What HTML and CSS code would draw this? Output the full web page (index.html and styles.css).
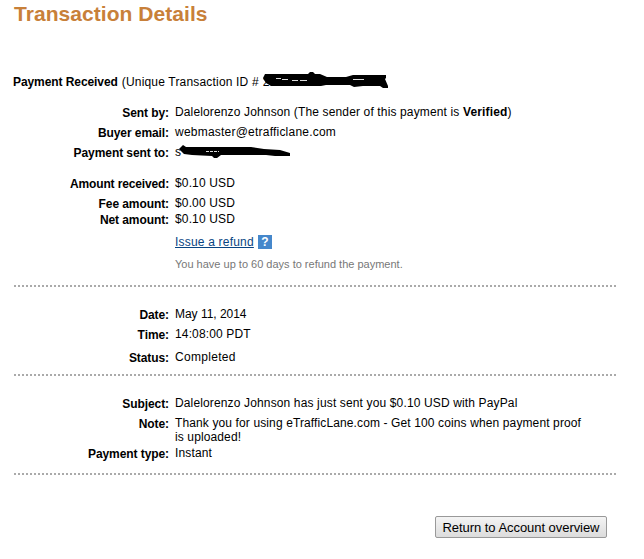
FILE: index.html
```
<!DOCTYPE html>
<html lang="en">
<head>
	<meta charset="utf-8">
	<title>Transaction Details</title>
	<link rel="stylesheet" href="styles.css">
</head>
<body>

	<h1>Transaction Details</h1>

	<div class="heading">
		<b class="received">Payment Received</b>
		<span class="unique">(Unique Transaction ID #</span>
		<span class="hidden">2<svg class="scribble" width="128" height="20" viewBox="0 0 128 20">
			<path d="M0 7L2 3H45L47 1H50L52 3H57L64 6H83L90 4H123V7L122 8L125 15V17H120L117 15H100L91 16L87 14H63L58 15H8L3 12L1 9Z"/>
			<path class="gap" d="M13 7.5H18M19 8.5H25M29 9.5H35M37 9.5H44M90 8.5H101"/>
		</svg></span>
	</div>

	<dl class="section">
		<div class="row"><dt>Sent by:</dt><dd class="sender">Dalelorenzo Johnson (The sender of this payment is <b>Verified</b>)</dd></div>
		<div class="row"><dt>Buyer email:</dt><dd class="email">webmaster@etrafficlane.com</dd></div>
		<div class="row"><dt>Payment sent to:</dt><dd><span class="hidden">s<svg class="scribble account" width="118" height="20" viewBox="0 0 118 20">
			<path d="M5 8L9 4L12 6H77L90 8L106 9L116 12V15L101 15L92 14H47L43 17H40L38 15L18 14L10 13Z"/>
			<path class="gap" d="M32 10.5H45" stroke-dasharray="3 1"/>
		</svg></span></dd></div>
		<div class="row wide"><dt class="amount">Amount received:</dt><dd>$0.10 USD</dd></div>
		<div class="row"><dt>Fee amount:</dt><dd>$0.00 USD</dd></div>
		<div class="row tight"><dt>Net amount:</dt><dd>$0.10 USD</dd></div>
		<div class="row refund"><dt></dt><dd><a href="#">Issue a refund</a><span class="help">?</span></dd></div>
		<div class="row hint"><dt></dt><dd>You have up to 60 days to refund the payment.</dd></div>
	</dl>

	<dl class="section date">
		<div class="row"><dt>Date:</dt><dd class="day">May 11, 2014</dd></div>
		<div class="row"><dt>Time:</dt><dd>14:08:00 PDT</dd></div>
		<div class="row status"><dt>Status:</dt><dd>Completed</dd></div>
	</dl>

	<dl class="section subject">
		<div class="row"><dt>Subject:</dt><dd>Dalelorenzo Johnson has just sent you $0.10 USD with PayPal</dd></div>
		<div class="row"><dt>Note:</dt><dd class="note">Thank you for using eTrafficLane.com - Get 100 coins when payment proof<br>is uploaded!</dd></div>
		<div class="row tight"><dt>Payment type:</dt><dd>Instant</dd></div>
	</dl>

	<div class="actions">
		<button>Return to Account overview</button>
	</div>

</body>
</html>
```
FILE: styles.css
```
body{
	margin: 0;
	padding: 2px 28px 0 14px;
	background: white;
	color: black;
	font: 12px/14px "Liberation Sans", Arial, sans-serif;
}

h1{
	margin: 0;
	color: #c88039;
	font-size: 21px;
	line-height: 24px;
	letter-spacing: 0.05px;
}

b, dt{
	font-weight: bold;
	letter-spacing: -0.08px;
}

.heading{
	display: flex;
	gap: 4px;
	margin: 49px 0 16px -1px;
	white-space: nowrap;
}

.unique{
	letter-spacing: 0.18px;
}

.hidden{
	position: relative;
}

.scribble{
	position: absolute;
	left: 0;
	top: -4px;
}

.account{
	left: -1px;
}

.gap{
	fill: none;
	stroke: #ddd;
	stroke-width: 1;
}

.section{
	margin: 0;
	padding-bottom: 14px;
	border-bottom: 2px dotted #aaa;
}

.row{
	display: flex;
	gap: 6px;
	margin-top: 6px;
	white-space: nowrap;
}

.section .row:first-child{
	margin-top: 0;
}

.row dt{
	width: 155px;
	padding-top: 1px;
	margin-bottom: -1px;
	text-align: right;
}

.row .amount{
	letter-spacing: -0.15px;
}

.row dd{
	margin: 0;
	letter-spacing: 0.14px;
}

.sender b{
	letter-spacing: 0.15px;
}

.row .email{
	letter-spacing: 0.22px;
}

.row .note{
	letter-spacing: 0.12px;
}

.row .day{
	letter-spacing: -0.03px;
}

.wide{
	margin-top: 17px;
}

.tight{
	margin-top: 2px;
}

.refund{
	margin-top: 9px;
}

.refund dd{
	display: flex;
	gap: 4px;
}

.refund a{
	color: #084482;
	letter-spacing: 0.2px;
}

.help{
	width: 14px;
	height: 14px;
	background: #4587cb;
	color: white;
	font-weight: bold;
	text-align: center;
	letter-spacing: 0;
}

.hint{
	margin-top: 8px;
	color: #777;
	font-size: 11px;
}

.row.hint dd{
	letter-spacing: 0;
}

.date{
	padding: 20px 0 10px;
}

.status{
	margin-top: 9px;
}

.status dd{
	letter-spacing: 0.3px;
}

.subject{
	padding: 20px 0 13px;
}

.actions{
	display: flex;
	justify-content: flex-end;
	margin: 41px 9px 0 0;
}

button{
	width: 172px;
	height: 22px;
	padding: 0;
	border: 1px solid #999;
	border-radius: 2px;
	background: linear-gradient(#f4f4f4, #dcdcdc);
	color: black;
	font: 13px "Liberation Sans", Arial, sans-serif;
	letter-spacing: -0.05px;
	white-space: nowrap;
}
```
